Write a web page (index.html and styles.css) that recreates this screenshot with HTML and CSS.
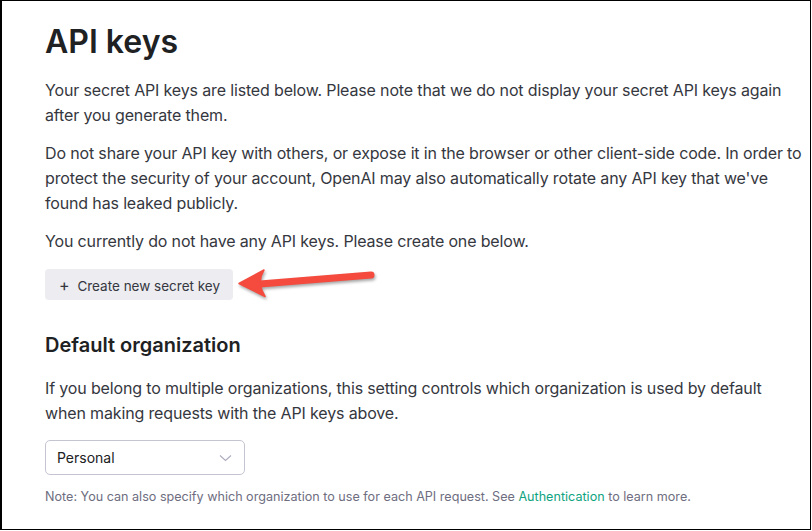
FILE: index.html
```html
<!DOCTYPE html>
<html lang="en-US">
  <head>
    <title>API keys</title>
    <meta name="viewport" content="width=device-width, initial-scale=1" />
    <link rel="stylesheet" href="styles.css">
  </head>
  <body>
    <main class="frame">
      <h1>API keys</h1>
      <p>
        Your secret API keys are listed below. Please note that we do not
        display your secret API keys again after you generate them.
      </p>
      <p>
        Do not share your API key with others, or expose it in the browser or
        other client-side code. In order to protect the security of your
        account, OpenAI may also automatically rotate any API key that we've
        found has leaked publicly.
      </p>
      <p>You currently do not have any API keys. Please create one below.</p>
      <div class="create-row">
        <button type="button" class="btn-create">
          <span class="plus">+</span> Create new secret key
        </button>
        <!-- annotation arrow -->
        <svg class="arrow" width="150" height="50" viewBox="0 0 150 50">
          <line x1="30" y1="24" x2="141" y2="15" stroke="#f44b3e" stroke-width="7" stroke-linecap="round" />
          <path d="M9 23.5 L34 10 Q29.5 17 30.5 24 Q31 30 35 36.5 Z" fill="#f44b3e" stroke="#f44b3e" stroke-width="1.5" stroke-linejoin="round" />
        </svg>
      </div>
      <h2>Default organization</h2>
      <p>
        If you belong to multiple organizations, this setting controls which
        organization is used by default when making requests with the API keys
        above.
      </p>
      <div class="select">
        <span>Personal</span>
        <svg width="13" height="8" viewBox="0 0 13 8">
          <path d="M1 1.5 L6.5 6.5 L12 1.5" fill="none" stroke="#acacbe" stroke-width="1.1" />
        </svg>
      </div>
      <p class="note">
        Note: You can also specify which organization to use for each API
        request. See <a href="#">Authentication</a> to learn more.
      </p>
    </main>
  </body>
</html>
```

FILE: styles.css
```css
body {
  margin: 0;
  font-family: Inter, "Noto Sans", sans-serif;
  color: #353740;
  background: #fff;
}
.frame {
  box-sizing: border-box;
  width: 811px;
  height: 530px;
  border: 1px solid #000;
  border-left-width: 2px;
  padding: 21px 4px 0 43px;
  overflow: hidden;
}
h1 {
  margin: 0 0 16px;
  font-size: 32px;
  line-height: 40px;
  font-weight: 600;
  color: #202123;
}
p {
  margin: 0 0 13px;
  font-size: 16px;
  line-height: 25px;
  letter-spacing: -0.15px;
}
.create-row {
  position: relative;
  margin-top: 15px;
}
.btn-create {
  height: 31px;
  padding: 0 13px 0 14px;
  border: 0;
  border-radius: 4px;
  background: #ececf1;
  color: #353740;
  font: inherit;
  font-size: 13.5px;
}
.plus {
  margin-right: 4px;
  font-size: 16px;
}
.arrow {
  position: absolute;
  left: 185px;
  top: -9px;
  filter: drop-shadow(1px 2px 1.5px rgba(0, 0, 0, 0.35));
}
h2 {
  margin: 31px 0 17px;
  font-size: 20px;
  line-height: 28px;
  font-weight: 600;
  color: #202123;
}
.select {
  box-sizing: border-box;
  width: 200px;
  height: 35px;
  margin-top: 14px;
  padding: 0 12px 0 11px;
  border: 1px solid #c5c5d2;
  border-radius: 5px;
  display: flex;
  align-items: center;
  justify-content: space-between;
  font-size: 14px;
  color: #202123;
}
.note {
  margin-top: 13px;
  font-size: 12.6px;
  line-height: 18px;
  letter-spacing: 0;
  color: #6e6e80;
}
.note a {
  color: #10a37f;
  text-decoration: none;
}
```
